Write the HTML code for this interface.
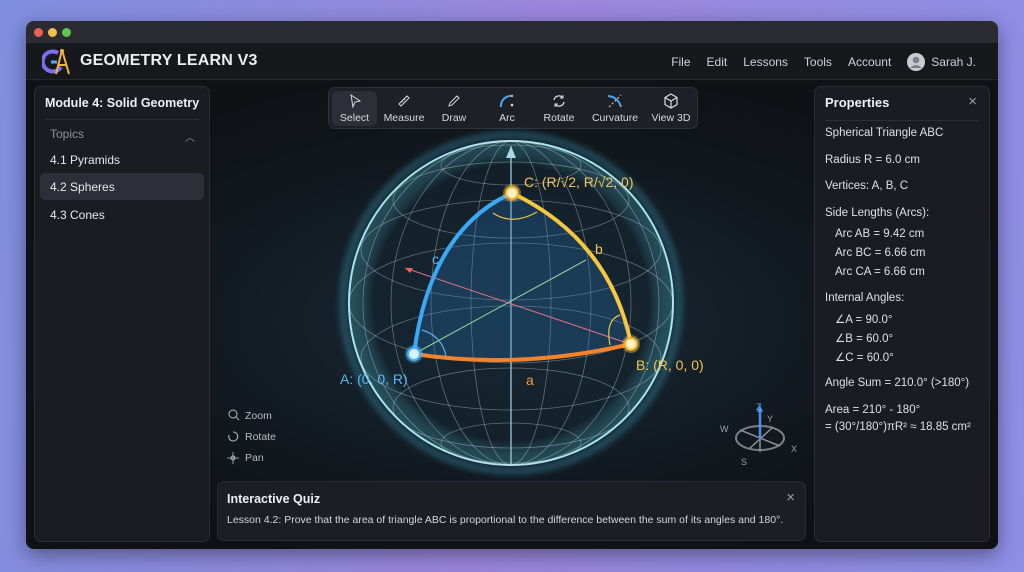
<!DOCTYPE html>
<html><head><meta charset="utf-8"><style>
*{box-sizing:border-box;margin:0;padding:0}
body{width:1024px;height:572px;overflow:hidden;background:linear-gradient(100deg,#7f8fe0 0%,#9a86dc 50%,#8d8fe6 100%);font-family:"Liberation Sans","DejaVu Sans",sans-serif;color:#e6e8ec;position:relative}
.win{position:absolute;left:26px;top:21px;width:972px;height:528px;background:#111317;border-radius:8px;overflow:hidden;box-shadow:0 6px 20px rgba(0,0,0,.4)}
.tb{height:22px;background:#2a2c31;position:relative}
.tb i{position:absolute;top:7px;width:9px;height:9px;border-radius:50%}
.hdr{position:absolute;top:22px;left:0;right:0;height:37px;background:#16181c;border-bottom:1px solid #24262b}
.title{position:absolute;left:54px;top:9px;font-size:16px;font-weight:bold;color:#eceef2;letter-spacing:.2px}
.nav{position:absolute;right:22px;top:10px;font-size:12px;color:#cfd2d8;display:flex;gap:16px;align-items:center}
.panel{position:absolute;background:#1a1c21;border:1px solid #2a2d33;border-radius:7px}
.lp{left:8px;top:65px;width:176px;height:456px}
.rp{left:788px;top:65px;width:176px;height:456px}
.sel{background:#2c2f37;border-radius:5px}
.rp p{font-size:11.5px;color:#dde0e5;position:absolute;left:10px;white-space:nowrap}
.qz{left:191px;top:460px;width:589px;height:60px;background:#1c1e23}
.tool{position:absolute;top:66px;left:302px;width:370px;height:42px;background:#1d2026;border:1px solid #2e3138;border-radius:7px}
.tool div{position:absolute;top:0;height:40px;font-size:10.5px;color:#d8dbe0;text-align:center}
.tool span{position:absolute;bottom:4px;left:0;right:0}
</style></head><body>
<div class="win">
<div class="tb"><i style="left:8px;background:#ee5f57"></i><i style="left:22px;background:#f3bd4f"></i><i style="left:36px;background:#5fc454"></i></div>
<div class="hdr">
<svg style="position:absolute;left:16px;top:5px" width="30" height="28" viewBox="0 0 30 28"><path d="M16 5 A10 10 0 1 0 19 19" stroke="#7e6ef0" stroke-width="4" fill="none"/><path d="M9 14 h6" stroke="#58a8f0" stroke-width="3"/><path d="M20 2 L14 26 M20 2 L27 26 M16 17 h9" stroke="#f0b440" stroke-width="2" fill="none"/><circle cx="20" cy="3" r="2" fill="#f0b440"/></svg>
<div class="title">GEOMETRY LEARN V3</div>
<div class="nav"><span>File</span><span>Edit</span><span>Lessons</span><span>Tools</span><span>Account</span><span style="display:flex;align-items:center;gap:6px"><svg width="18" height="18" viewBox="0 0 18 18"><circle cx="9" cy="9" r="9" fill="#c9ccd2"/><circle cx="9" cy="7" r="3.3" fill="#7d8189"/><path d="M3 15 Q9 9 15 15" fill="#7d8189"/></svg>Sarah J.</span></div>
</div>
<div style="position:absolute;left:0;right:0;top:60px;bottom:0;background:radial-gradient(ellipse at 485px 240px,#1a2c38 0%,#121920 45%,#0f1115 75%)"></div>
<div class="panel lp">
<div style="position:absolute;left:10px;top:9px;font-size:12.5px;font-weight:bold;color:#eef0f3;white-space:nowrap">Module 4: Solid Geometry</div>
<div style="position:absolute;left:10px;right:10px;top:32px;border-top:1px solid #2c2f35"></div>
<div style="position:absolute;left:15px;top:40px;font-size:12px;color:#8e939c">Topics</div>
<div style="position:absolute;right:14px;top:42px;font-size:10px;color:#8e939c">︿</div>
<div style="position:absolute;left:15px;top:66px;font-size:12px">4.1 Pyramids</div>
<div class="sel" style="position:absolute;left:5px;right:5px;top:86px;height:27px"></div>
<div style="position:absolute;left:15px;top:93px;font-size:12px">4.2 Spheres</div>
<div style="position:absolute;left:15px;top:121px;font-size:12px">4.3 Cones</div>
</div>
<div class="tool">
<div class="sel" style="left:3px;width:45px;top:3px;height:35px"></div>
<div style="left:3px;width:45px"><svg style="margin-top:6px" width="14" height="14" viewBox="0 0 14 14"><path d="M3 1 L12 7 L7 8 L5 13 Z" fill="none" stroke="#d8dbe0"/></svg><span>Select</span></div>
<div style="left:52px;width:46px"><svg style="margin-top:6px" width="14" height="14" viewBox="0 0 14 14"><path d="M2 10 L10 2 L12 4 L4 12 Z M5 7 l1 1 M7 5 l1 1" fill="none" stroke="#d8dbe0"/></svg><span>Measure</span></div>
<div style="left:103px;width:44px"><svg style="margin-top:6px" width="14" height="14" viewBox="0 0 14 14"><path d="M2 12 L3 9 L10 2 L12 4 L5 11 Z" fill="none" stroke="#d8dbe0"/></svg><span>Draw</span></div>
<div style="left:158px;width:40px"><svg style="margin-top:5px" width="16" height="16" viewBox="0 0 16 16"><path d="M2 14 A10 10 0 0 1 13 3" fill="none" stroke="#4aa6ee" stroke-width="2"/><circle cx="13" cy="12" r="1.3" fill="#ddd"/><circle cx="13" cy="3" r="1.2" fill="#f0b040"/></svg><span>Arc</span></div>
<div style="left:205px;width:50px"><svg style="margin-top:5px" width="16" height="16" viewBox="0 0 16 16"><path d="M3 7 A5 5 0 0 1 12 5 M13 9 A5 5 0 0 1 4 11" fill="none" stroke="#d8dbe0" stroke-width="1.3"/><path d="M12 2 v3 h-3 M4 14 v-3 h3" fill="none" stroke="#d8dbe0"/></svg><span>Rotate</span></div>
<div style="left:258px;width:56px"><svg style="margin-top:5px" width="18" height="16" viewBox="0 0 18 16"><path d="M2 3 Q12 4 15 14" fill="none" stroke="#4aa6ee" stroke-width="2"/><path d="M3 14 L15 2" stroke="#d8dbe0" stroke-dasharray="2 2"/></svg><span>Curvature</span></div>
<div style="left:318px;width:48px"><svg style="margin-top:5px" width="16" height="16" viewBox="0 0 16 16"><path d="M8 1 L14 4.5 L14 11.5 L8 15 L2 11.5 L2 4.5 Z M2 4.5 L8 8 L14 4.5 M8 8 V15" fill="none" stroke="#d8dbe0" stroke-width="1.2"/></svg><span>View 3D</span></div>
</div>
<svg style="position:absolute;left:0;top:0" width="972" height="528" viewBox="26 21 972 528">
<defs><radialGradient id="sg" cx="50%" cy="50%" r="50%"><stop offset="0" stop-color="#14232d" stop-opacity=".7"/><stop offset=".85" stop-color="#13232d" stop-opacity=".6"/><stop offset="1" stop-color="#4bb8d0" stop-opacity=".3"/></radialGradient>
<filter id="gl"><feGaussianBlur stdDeviation="3"/></filter></defs>
<circle cx="511" cy="303" r="168" fill="none" stroke="#3aa0c0" stroke-opacity=".35" stroke-width="8" filter="url(#gl)"/>
<circle cx="511" cy="303" r="162" fill="url(#sg)" stroke="#a8e4ee" stroke-width="2"/>
<g fill="none" stroke="#cfe2ea" stroke-opacity=".4" stroke-width=".8">
<ellipse cx="511" cy="303" rx="162" ry="60"/><ellipse cx="511" cy="250" rx="150" ry="50"/><ellipse cx="511" cy="200" rx="118" ry="38"/><ellipse cx="511" cy="165" rx="70" ry="20"/>
<ellipse cx="511" cy="358" rx="150" ry="52"/><ellipse cx="511" cy="408" rx="118" ry="40"/><ellipse cx="511" cy="443" rx="70" ry="20"/>
<ellipse cx="511" cy="303" rx="40" ry="162"/><ellipse cx="511" cy="303" rx="80" ry="162"/><ellipse cx="511" cy="303" rx="120" ry="162"/><ellipse cx="511" cy="303" rx="148" ry="162"/>
</g>
<path d="M511 465 V146" stroke="#a8d8e8" stroke-width="1.2"/><path d="M506 158 L511 146 L516 158" fill="#a8d8e8"/>
<path d="M414 354 Q430 230 512 193 Q610 240 631 344 Q520 370 414 354 Z" fill="#2a78c0" fill-opacity=".28"/>
<path d="M630 344 L405 268" stroke="#e0708a" stroke-width="1"/><path d="M405 268 l8 0 l-3 5z" fill="#ee6655"/>
<path d="M414 354 L586 260" stroke="#8fd6a0" stroke-width="1"/>
<path d="M414 354 Q430 230 512 193" fill="none" stroke="#3aa8f5" stroke-width="4"/>
<path d="M512 193 Q610 240 631 344" fill="none" stroke="#f5c840" stroke-width="4"/>
<path d="M414 354 Q520 370 631 344" fill="none" stroke="#f5832a" stroke-width="4"/>
<path d="M493 213 Q512 226 537 212" fill="none" stroke="#e8c840" stroke-width="1.2"/>
<path d="M610 345 Q605 320 620 315" fill="none" stroke="#e8c840" stroke-width="1.2"/>
<path d="M422 330 Q442 336 446 356" fill="none" stroke="#5ab0e8" stroke-width="1.2"/>
<circle cx="414" cy="354" r="9" fill="#4ab8ff" opacity=".4"/><circle cx="414" cy="354" r="6" fill="#d8f2ff" stroke="#4ab0ff" stroke-width="2"/>
<circle cx="631" cy="344" r="9" fill="#ffc040" opacity=".4"/><circle cx="631" cy="344" r="6" fill="#fff2c0" stroke="#f0b030" stroke-width="2"/>
<circle cx="512" cy="193" r="9" fill="#ffc040" opacity=".4"/><circle cx="512" cy="193" r="6" fill="#fff2c0" stroke="#f0b030" stroke-width="2"/>
<g font-family="Liberation Sans,sans-serif" font-size="14">
<text x="524" y="187" fill="#f2c455">C: (R/√2, R/√2, 0)</text>
<text x="636" y="370" fill="#f2c455">B: (R, 0, 0)</text>
<text x="340" y="384" fill="#5ab8f0">A: (0, 0, R)</text>
<text x="595" y="254" fill="#f2c455">b</text>
<text x="432" y="264" fill="#5ab8f0">c</text>
<text x="526" y="385" fill="#f59a3a">a</text>
</g>
<g font-family="Liberation Sans,sans-serif" font-size="10.5" fill="#b8bcc4">
<circle cx="233" cy="414" r="4" fill="none" stroke="#b8bcc4"/><path d="M236 417 l3 3" stroke="#b8bcc4"/><text x="245" y="419">Zoom</text>
<path d="M229 435 A4.5 4.5 0 1 0 233 432" fill="none" stroke="#b8bcc4"/><text x="245" y="440">Rotate</text>
<path d="M233 452 v12 M227 458 h12" stroke="#b8bcc4" stroke-width=".8"/><circle cx="233" cy="458" r="2" fill="none" stroke="#b8bcc4"/><text x="245" y="461">Pan</text>
</g>
<g font-family="Liberation Sans,sans-serif" font-size="9" fill="#9aa0a8">
<ellipse cx="760" cy="438" rx="24" ry="12" fill="none" stroke="#7a808a" stroke-width="2"/>
<path d="M740 430 L780 446 M750 448 L772 428 M760 428 L760 452" stroke="#8a9098" stroke-width="1.5"/>
<path d="M760 438 V410" stroke="#4a90f0" stroke-width="2.5"/><path d="M757 412 L760 405 L763 412" fill="#4a90f0"/>
<text x="756" y="410" fill="#6aa8f0">Z</text><text x="767" y="422">Y</text><text x="720" y="432">W</text><text x="791" y="452">X</text><text x="741" y="465">S</text>
</g>
</svg>
<div class="panel rp">
<div style="position:absolute;left:10px;top:8px;font-size:13px;font-weight:bold;color:#eef0f3">Properties</div>
<div style="position:absolute;right:12px;top:6px;font-size:15px;color:#9aa0a8">×</div>
<div style="position:absolute;left:10px;right:10px;top:33px;border-top:1px solid #2c2f35"></div>
<p style="top:40px">Spherical Triangle ABC</p>
<p style="top:67px">Radius R = 6.0 cm</p>
<p style="top:93px">Vertices: A, B, C</p>
<p style="top:120px">Side Lengths (Arcs):</p>
<p style="top:141px;left:20px">Arc AB = 9.42 cm</p>
<p style="top:160px;left:20px">Arc BC = 6.66 cm</p>
<p style="top:179px;left:20px">Arc CA = 6.66 cm</p>
<p style="top:205px">Internal Angles:</p>
<p style="top:225px;left:20px">∠A = 90.0°</p>
<p style="top:244px;left:20px">∠B = 60.0°</p>
<p style="top:263px;left:20px">∠C = 60.0°</p>
<p style="top:290px">Angle Sum = 210.0° (&gt;180°)</p>
<p style="top:317px">Area = 210° - 180°</p>
<p style="top:334px">= (30°/180°)πR² ≈ 18.85 cm²</p>
</div>
<div class="panel qz">
<div style="position:absolute;left:9px;top:10px;font-size:12.5px;font-weight:bold;color:#eef0f3">Interactive Quiz</div>
<div style="position:absolute;right:10px;top:7px;font-size:15px;color:#9aa0a8">×</div>
<div style="position:absolute;left:9px;top:32px;font-size:10.5px;color:#d4d7dc;white-space:nowrap">Lesson 4.2: Prove that the area of triangle ABC is proportional to the difference between the sum of its angles and 180°.</div>
</div>
</div>
</body></html>
